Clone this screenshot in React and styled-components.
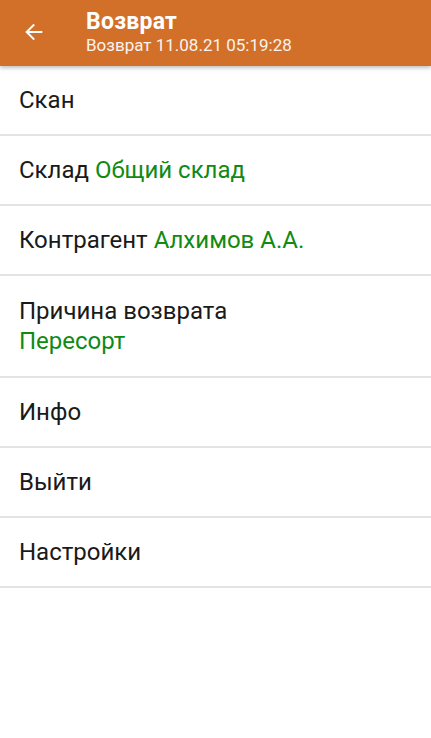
import styled, { createGlobalStyle } from 'styled-components'

const GlobalStyle = createGlobalStyle`
	html, body {
		margin: 0;
		padding: 0;
		background: #ffffff;
	}
	body {
		font-family: Roboto, 'Noto Sans', sans-serif;
		-webkit-font-smoothing: antialiased;
	}
`

const Screen = styled.div`
	width: 431px;
	min-height: 738px;
	background: #ffffff;
`

const AppBar = styled.header`
	height: 66px;
	background: #d2702a;
	display: flex;
	align-items: center;
	box-shadow: 0 2px 4px rgba(0, 0, 0, 0.25);
	position: relative;
	z-index: 1;
`

const BackButton = styled.button`
	width: 66px;
	height: 66px;
	padding: 0 0 2px 2px;
	border: 0;
	background: transparent;
	display: flex;
	align-items: center;
	justify-content: center;
	color: #ffffff;
	margin-right: 20px;
`

const Titles = styled.div`
	display: flex;
	flex-direction: column;
	color: #ffffff;
	padding-bottom: 2px;
`

const Title = styled.h1`
	margin: 0;
	font-size: 23px;
	font-weight: 700;
	line-height: 27px;
	letter-spacing: 0.25px;
`

const Subtitle = styled.div`
	font-size: 17px;
	line-height: 21px;
	opacity: 0.92;
`

const Menu = styled.ul`
	list-style: none;
	margin: 0;
	padding: 0;
`

const Item = styled.li`
	padding: 20px 19px;
	border-bottom: 2px solid #e3e3e3;
	font-size: 24px;
	line-height: ${props => (props.$tall ? '30px' : '28px')};
	color: #1a1a1a;
`

const Value = styled.span`
	color: #108a14;
`

const ValueLine = styled.div`
	color: #108a14;
`

function BackArrow() {
	return (
		<svg width="22" height="22" viewBox="0 0 24 24" fill="none">
			<path
				d="M20 12H4.5M11.5 4.5L4 12l7.5 7.5"
				stroke="currentColor"
				strokeWidth="2.2"
				strokeLinecap="square"
			/>
		</svg>
	)
}

function App() {
	return (
		<Screen>
			<GlobalStyle />
			<AppBar>
				<BackButton aria-label="Назад">
					<BackArrow />
				</BackButton>
				<Titles>
					<Title>Возврат</Title>
					<Subtitle>Возврат 11.08.21 05:19:28</Subtitle>
				</Titles>
			</AppBar>
			<Menu>
				<Item>Скан</Item>
				<Item>
					Склад <Value>Общий склад</Value>
				</Item>
				<Item>
					Контрагент <Value>Алхимов А.А.</Value>
				</Item>
				<Item $tall>
					Причина возврата
					<ValueLine>Пересорт</ValueLine>
				</Item>
				<Item>Инфо</Item>
				<Item>Выйти</Item>
				<Item>Настройки</Item>
			</Menu>
		</Screen>
	)
}

export default App
